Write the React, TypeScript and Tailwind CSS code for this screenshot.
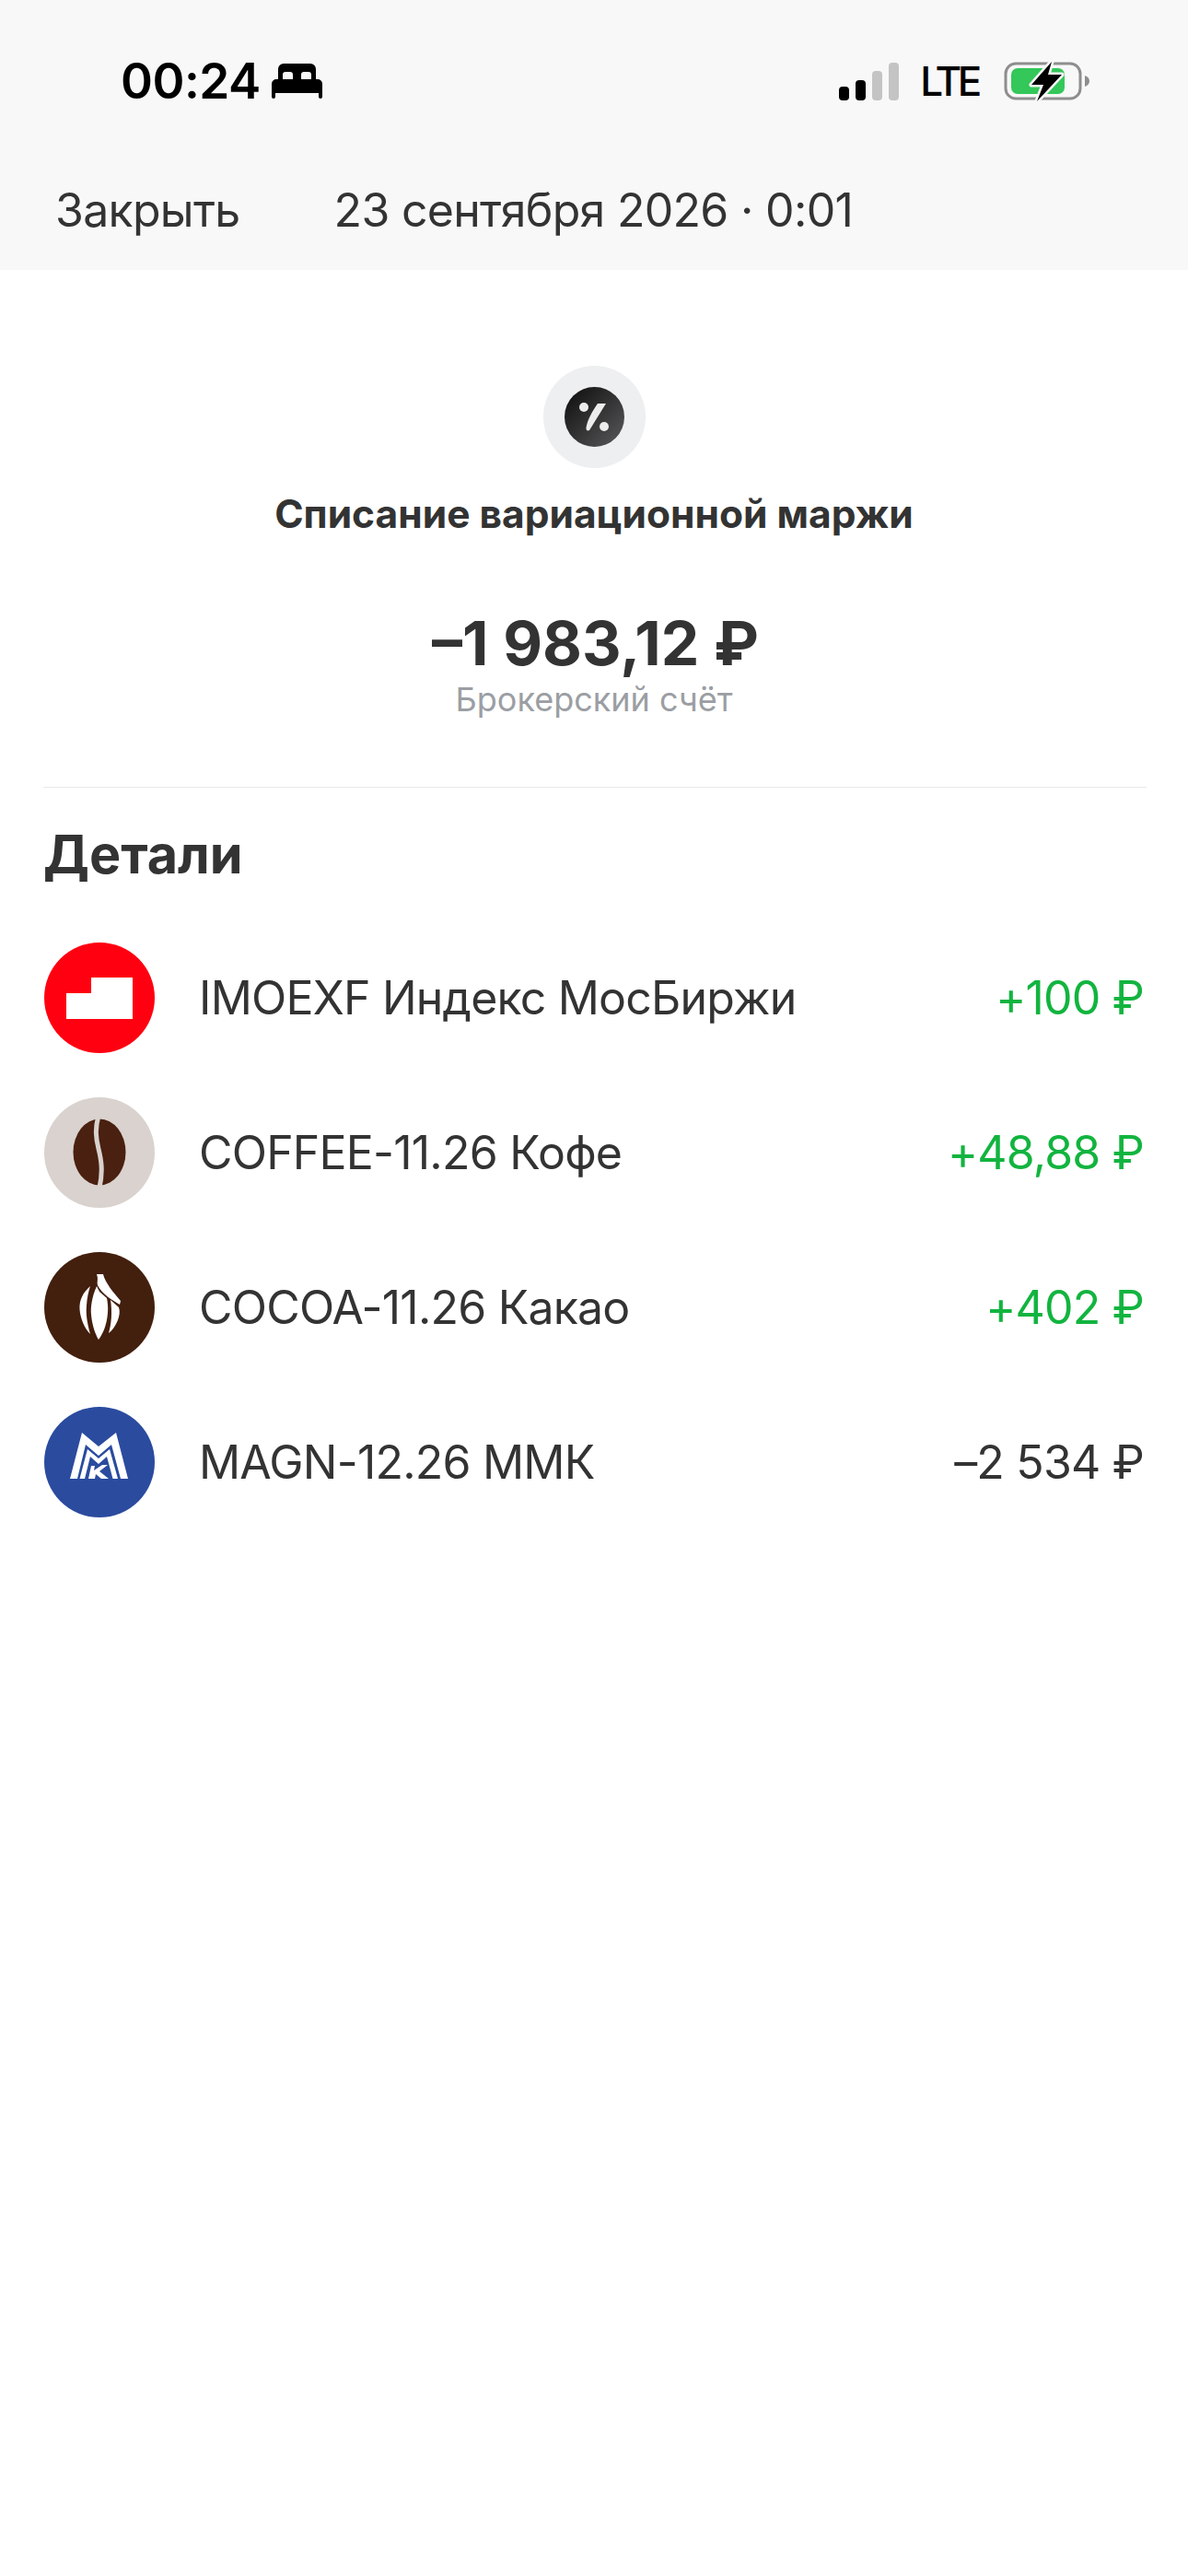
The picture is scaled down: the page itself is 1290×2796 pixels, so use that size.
const ROWS = [
  { id: 'imoex', name: 'IMOEXF Индекс МосБиржи', value: '+100 ₽', up: true },
  { id: 'coffee', name: 'COFFEE-11.26 Кофе', value: '+48,88 ₽', up: true },
  { id: 'cocoa', name: 'COCOA-11.26 Какао', value: '+402 ₽', up: true },
  { id: 'magn', name: 'MAGN-12.26 ММК', value: '–2 534 ₽', up: false },
];

function BedIcon() {
  return (
    <svg viewBox="0 0 55 38" className="h-[38px] w-[55px]" fill="#000">
      <path d="M7 17V6a6 6 0 0 1 6-6h29a6 6 0 0 1 6 6v11h-5v-5a3 3 0 0 0-3-3h-5a3 3 0 0 0-3 3v5h-9v-5a3 3 0 0 0-3-3h-5a3 3 0 0 0-3 3v5z" />
      <path d="M5 17h45a5 5 0 0 1 5 5v14a2 2 0 0 1-4 0v-4H4v4a2 2 0 0 1-4 0V22a5 5 0 0 1 5-5z" />
    </svg>
  );
}

function SignalIcon() {
  return (
    <svg viewBox="0 0 66 41" className="h-[41px] w-[66px]">
      <rect x="0" y="26" width="11" height="15" rx="4" fill="#000" />
      <rect x="18" y="19" width="11" height="22" rx="4" fill="#000" />
      <rect x="36" y="9" width="11" height="32" rx="4" fill="#c4c4c4" />
      <rect x="54" y="0" width="11" height="41" rx="4" fill="#c4c4c4" />
    </svg>
  );
}

function BatteryIcon() {
  return (
    <svg viewBox="0 0 94 46" className="h-[46px] w-[94px]">
      <rect x="2" y="4" width="81" height="38" rx="11" fill="none" stroke="#8e8e8e" strokeWidth="3" />
      <rect x="8" y="9" width="58" height="28" rx="7" fill="#34c759" />
      <path d="M88 17c3 1 5 3 5 6s-2 5-5 6z" fill="#8e8e8e" />
      <path
        d="M52 2 30 27h13l-7 18 27-29H48z"
        fill="#000"
        stroke="#f8f8f8"
        strokeWidth="5"
        strokeLinejoin="round"
        paintOrder="stroke"
      />
    </svg>
  );
}

function PercentIcon() {
  return (
    <svg viewBox="0 0 65 65" className="h-[65px] w-[65px]">
      <defs>
        <linearGradient id="pct" x1="0" y1="0" x2="1" y2="1">
          <stop offset="0" stopColor="#0c0c0c" />
          <stop offset="1" stopColor="#5a5a5c" />
        </linearGradient>
      </defs>
      <circle cx="32.5" cy="32.5" r="32.5" fill="url(#pct)" />
      <circle cx="21" cy="22" r="5" fill="#ececec" />
      <circle cx="43" cy="43" r="5" fill="#ececec" />
      <path d="M36 18h9L27 47c-2 1-4 0-3.500-3 1.500-9 7-18 12.500-26z" fill="#ececec" />
    </svg>
  );
}

function RowLogo({ id }: { id: string }) {
  if (id === 'imoex') {
    return (
      <svg viewBox="0 0 120 120" className="h-[120px] w-[120px] shrink-0">
        <circle cx="60" cy="60" r="60" fill="#ff0011" />
        <path d="M24 55h27V38h45v45H24z" fill="#fff" />
      </svg>
    );
  }
  if (id === 'coffee') {
    return (
      <svg viewBox="0 0 120 120" className="h-[120px] w-[120px] shrink-0">
        <circle cx="60" cy="60" r="60" fill="#d9d2ce" />
        <ellipse cx="60" cy="59.5" rx="28.5" ry="36" fill="#4a2010" />
        <path d="M59 20c-4 14-3 24 0 36 3 12 5 24 1 42" fill="none" stroke="#d9d2ce" strokeWidth="5" />
      </svg>
    );
  }
  if (id === 'cocoa') {
    return (
      <svg viewBox="0 0 120 120" className="h-[120px] w-[120px] shrink-0">
        <circle cx="60" cy="60" r="60" fill="#431f0e" />
        <g fill="#fff">
          <path d="M57 37C52 48 50 60 51 68c1 12 5 22 8 27 4-5 9-15 10-29 .5-6 0-11-1-16l-8-7z" />
          <path d="M50 37c-8 7-12 15-11.500 25C39 72 44 83 50 89c-3-11-5-21-4-31 .5-8 2-15 4-21z" />
          <path d="M72 52l9 8c3 8-3 22-11 28 3-10 4-23 2-36z" />
          <path d="M57 24h7c2 9 12 21 19 29l-1 4c-7-4-20-12-24-21-1-4 1-6-1-12z" />
        </g>
      </svg>
    );
  }
  return (
    <svg viewBox="0 0 120 120" className="h-[120px] w-[120px] shrink-0">
      <circle cx="60" cy="60" r="60" fill="#2b4b9f" />
      <g fill="#fff">
        <path d="M28 78 41 28l18 15 19-15 13 50h-8L73 41 59 53 45 41 36 78z" />
        <path d="M38.500 78 47 46l12 10 12-10 9 32h-5.500L68 54l-9 8-9-8-6 24z" />
        <path d="M48 78l3-14h4l-1 5 9-6h6l-9 7 10 8h-8l-6-5-1 5z" />
      </g>
    </svg>
  );
}

export default function App() {
  return (
    <div className="min-h-[2796px] bg-white font-['Inter',sans-serif] text-[#333333]">
      <header className="h-[293px] bg-[#f8f8f8]">
        <div className="flex h-[176px] items-center justify-between pl-[131px] pr-[106px]">
          <div className="flex items-center gap-[12px]">
            <span className="text-[53px] font-semibold leading-none tracking-[-0.5px] text-black">00:24</span>
            <BedIcon />
          </div>
          <div className="flex items-center">
            <SignalIcon />
            <span className="ml-[22px] text-[44px] font-medium leading-none tracking-[-0.1em] text-black">LTE</span>
            <span className="ml-[28px]">
              <BatteryIcon />
            </span>
          </div>
        </div>
        <div className="flex h-[104px] items-center gap-[102px] pl-[60px] text-[50px] leading-none tracking-[-0.7px]">
          <span>Закрыть</span>
          <span>23 сентября 2026 · 0:01</span>
        </div>
      </header>
      <main className="px-12 pt-[104px]">
        <div className="flex flex-col items-center">
          <div className="flex h-[111px] w-[111px] items-center justify-center rounded-full bg-[#edeff0]">
            <PercentIcon />
          </div>
          <h1 className="mt-[22px] text-[42.5px] font-bold leading-[56px]">Списание вариационной маржи</h1>
          <div className="mt-[73px] pl-[3px] text-[66px] font-bold leading-[78px]">–1 983,12 ₽</div>
          <div className="text-[36px] leading-[44px] text-[#9b9ea3]">Брокерский счёт</div>
        </div>
        <div className="ml-[-1px] mr-[-3px] mt-[73px] h-px bg-[#e8e8e8]" />
        <h2 className="-ml-px mt-[37px] text-[57.5px] font-bold leading-[70px]">Детали</h2>
        <ul className="mt-[37px]">
          {ROWS.map((row) => (
            <li key={row.id} className="flex h-[168px] items-center text-[50px] tracking-[-0.8px]">
              <RowLogo id={row.id} />
              <span className="ml-[48px] flex-1">{row.name}</span>
              <span className={row.up ? 'text-[#12b43f]' : ''}>{row.value}</span>
            </li>
          ))}
        </ul>
      </main>
    </div>
  );
}
